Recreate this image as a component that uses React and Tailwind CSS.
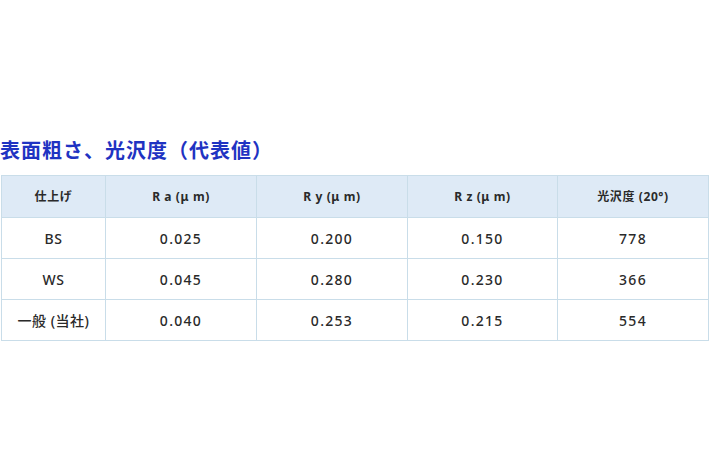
const headers = ['仕上げ', 'R a (μ m)', 'R y (μ m)', 'R z (μ m)', '光沢度 (20°)'];

const rows = [
  ['BS', '0.025', '0.200', '0.150', '778'],
  ['WS', '0.045', '0.280', '0.230', '366'],
  ['一般 (当社)', '0.040', '0.253', '0.215', '554'],
];

export default function App() {
  return (
    <div
      className="w-[710px] h-[474px] bg-white pt-[136px] pl-px"
      style={{ fontFamily: '"Noto Sans", "Noto Sans CJK JP", sans-serif' }}
    >
      <h1 className="text-[20px] leading-[30px] font-bold text-[#1f33c2] -ml-px tracking-[1px]">
        表面粗さ、光沢度（代表値）
      </h1>
      <table className="mt-[9px] w-[707px] table-fixed border-collapse text-[#2a2a2a]">
        <colgroup>
          <col className="w-[104px]" />
          <col className="w-[151px]" />
          <col className="w-[151px]" />
          <col className="w-[150px]" />
          <col className="w-[151px]" />
        </colgroup>
        <thead>
          <tr className="bg-[#deeaf6] h-[42px]">
            {headers.map((h) => (
              <th
                key={h}
                className="border border-[#c9dde9] text-[12px] font-bold text-center tracking-[0.6px]"
              >
                {h}
              </th>
            ))}
          </tr>
        </thead>
        <tbody>
          {rows.map((r) => (
            <tr key={r[0]} className="h-[41px]">
              {r.map((c, i) => (
                <td
                  key={i}
                  className={
                    i === 0
                      ? 'border border-[#c9dde9] text-center text-[14px] font-medium tracking-[0.5px]'
                      : 'border border-[#c9dde9] text-center text-[14px] font-medium tracking-[1.3px]'
                  }
                >
                  {c}
                </td>
              ))}
            </tr>
          ))}
        </tbody>
      </table>
    </div>
  );
}
